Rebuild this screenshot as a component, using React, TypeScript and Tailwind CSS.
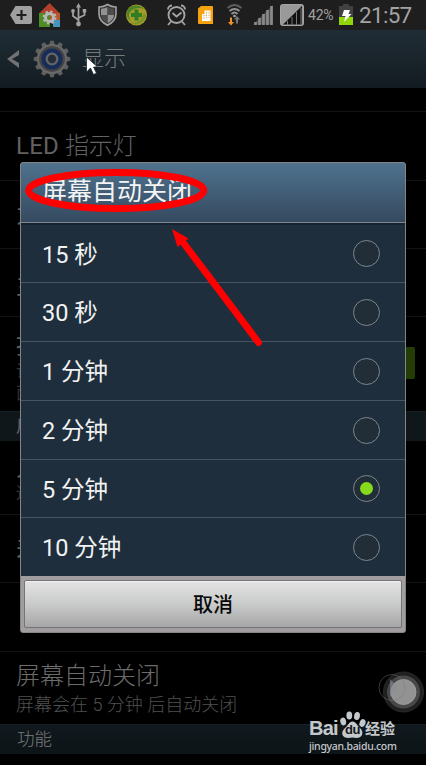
import React from "react";

const FONT = "font-['Roboto','Noto_Sans_CJK_SC',sans-serif]";

function StatusBar() {
  return (
    <div className="relative flex h-[30px] w-full shrink-0 items-center bg-[#1e1e1e]">
      <svg className="h-[30px] w-[305px] shrink-0" viewBox="0 0 305 30">
        <path d="M15.500 6H30a2 2 0 0 1 2 2v14a2 2 0 0 1-2 2H15.500L10 15z" fill="#a0a0a0" />
        <path d="M21.500 10v10M16.500 15h10" stroke="#1e1e1e" strokeWidth="2.200" />
        <path d="M39 13.500 49.500 3 60 13.500z" fill="#b2402d" />
        <path d="M39 13h11v14H39z" fill="#4d8d25" />
        <path d="M50 13h10v7H50z" fill="#b7562c" />
        <path d="M53 20h7v7h-7z" fill="#4695ba" />
        <circle cx="49.500" cy="17.500" r="4" fill="none" stroke="#b8b8b8" strokeWidth="3" />
        <circle cx="49.500" cy="17.500" r="6" fill="none" stroke="#b8b8b8" strokeWidth="2" strokeDasharray="2.300 2.412" />
        <path d="M78.500 6v18M73 11v5l5.500 4M84.500 11v4L78.500 18" stroke="#a0a0a0" strokeWidth="1.800" fill="none" />
        <g fill="#a0a0a0">
          <path d="m78.500 3 2.500 4.500h-5z" />
          <circle cx="78.500" cy="24" r="2.400" />
          <circle cx="73" cy="11" r="1.900" />
          <path d="M82.700 9h3.500v3.500h-3.500z" />
        </g>
        <path d="M107.500 4.500Q103 7.200 99 7v7c0 5.500 4 9 8.500 11.300 4.500-2.300 8.500-5.800 8.500-11.300V7q-4 .2-8.500-2.500z" fill="#333" stroke="#a3a3a3" strokeWidth="1.600" />
        <path d="M107.500 7q-3 1.600-6.500 1.700V15h6.500zM107.500 15v8.300c3.500-2 6.500-4.500 6.500-8.300z" fill="#929292" />
        <path d="M107.500 7q3 1.600 6.500 1.700V15h-6.500zM107.500 15v8.300c-3.500-2-6.500-4.500-6.500-8.300z" fill="#4c4c4c" />
        <circle cx="136.500" cy="15" r="10.500" fill="#a59b29" />
        <path d="M127 12c2-8 13-8 17-3-6-2-10-1-14 3-2 3-1 6 1 9-3-2-5-5-4-9z" fill="#4d8526" />
        <path d="M146 16c-2 8-11 11-17 6 7 2 12 0 15-9z" fill="#78952a" />
        <path d="M136.500 9.500v11M131 15h11" stroke="#2f7d22" strokeWidth="4" />
        <g fill="none" stroke="#a3a3a3" strokeWidth="1.900">
          <circle cx="176.500" cy="15" r="8" />
          <path d="m172.500 13 4 3.500 5-4M168 9.500a4 4 0 0 1 4-4M185 9.500a4 4 0 0 0-4-4M171 21.500l-3 3.500M182 21.500l3 3.500" />
        </g>
        <path d="M198 8.500 201 6h11q1 0 1 1v17H199q-1 0-1-1z" fill="#f5a20e" />
        <path d="M202 14h2.500v-3.500h6V21H202z" fill="#fff" />
        <path d="M204 15v4M206.500 12v6M209 12v6" stroke="#d99a32" strokeWidth=".9" strokeDasharray="1.300 1.300" />
        <g fill="none" strokeWidth="2">
          <path d="M227.500 8q7-6 14 0" stroke="#5e5e5e" />
          <path d="M229.500 11q5-4 10 0M231.500 14q3-3 6 0" stroke="#929292" />
        </g>
        <circle cx="234.500" cy="16" r="1.300" fill="#aaa" />
        <path d="M230 17.500h2V22h2l-3 3.500-3-3.500h2z" fill="#f29425" />
        <path d="m237 16 3 3.500h-2v4h-2v-4h-2z" fill="#777" />
        <path d="M253 24.500 273 5v19.500z" fill="#4c4c4c" />
        <path d="M255.500 25v-3M259.500 25v-7M263.500 25V14M267.500 25v-15M271.500 25V6" stroke="#8a8a8a" strokeWidth="2.600" />
        <rect x="280.500" y="4.500" width="23" height="21" rx="2" fill="#999" stroke="#a5a5a5" />
        <path d="M283 24.500 302 6v18.500z" fill="#111" />
        <path d="M287.500 25v-4M292 25v-8M296.500 25V12M301 25V8" stroke="#777" strokeWidth="1" />
      </svg>
      <span className="ml-[3px] w-[28px] whitespace-nowrap text-[14px] leading-[30px] tracking-[-0.2px] text-[#a0a0a0]">42%</span>
      <svg className="ml-[1px] h-[30px] w-[18px] shrink-0" viewBox="336 0 18 30">
        <path d="M342 4h6v2h4v11h-14V6h4z" fill="#414141" />
        <path d="M338 17h14v8h-14z" fill="#91d60b" />
        <path d="m343 10 6 0-1.500 4h3L343 22l1.500-6H341z" fill="#fff" />
      </svg>
      <span className="ml-[4px] whitespace-nowrap text-[22.500px] leading-[30px] tracking-[-0.7px] text-[#a3a3a3]">21:57</span>
    </div>
  );
}

function Gear() {
  return (
    <svg className="ml-[13px] h-[38px] w-[38px]" viewBox="-19 -19 38 38">
      {[0, 30, 60, 90, 120, 150].map((a) => (
        <path key={a} d="M-1.800-18.300h3.600l1.200 5h-6zM-1.800 18.300h3.600l1.200-5h-6z" fill="#5f5f5f" transform={`rotate(${a})`} />
      ))}
      <circle r="14" fill="#4b4542" stroke="#686868" strokeWidth="2.200" />
      <circle r="10.800" fill="#172d59" stroke="#343d51" />
      <circle r="5.300" fill="#252d38" stroke="#626466" strokeWidth="2.300" />
    </svg>
  );
}

function SettingRow({ className, children }: { className: string; children?: React.ReactNode }) {
  return <div className={`w-full shrink-0 overflow-hidden border-b border-[#141414] pl-[16px] ${className}`}>{children}</div>;
}

const options = [
  { label: "15 秒", size: "h-[60px] pt-[2px]" },
  { label: "30 秒", size: "h-[59px]" },
  { label: "1 分钟", size: "h-[59px]" },
  { label: "2 分钟", size: "h-[59px]" },
  { label: "5 分钟", size: "h-[58px]", selected: true },
  { label: "10 分钟", size: "h-[58px]" },
];

function Dialog() {
  return (
    <div className="absolute left-[20px] top-[162px] flex h-[471px] w-[386px] flex-col overflow-hidden rounded-[3px] border border-[#858585] bg-[#a19da1]">
      <div className="flex h-[60px] shrink-0 items-center border-b border-[#84888c] bg-gradient-to-b from-[#4f728e] to-[#354a60] pb-[1px] pl-[21px] text-[25px] text-[#f4f4f4]">
        <span>屏幕自动关闭</span>
      </div>
      <div className="shrink-0 bg-[#1e2e3c] shadow-[inset_0_2px_0_#162431]">
        {options.map((o, i) => (
          <div
            key={o.label}
            className={`flex items-center justify-between pl-[21px] pr-[25px] text-[23.500px] text-[#f2f2f2] ${o.size} ${i < 5 ? "border-b border-[#475461]" : ""}`}
          >
            <span className="pt-[2px] leading-[30px]">{o.label}</span>
            <span className="flex h-[27px] w-[27px] items-center justify-center rounded-full border border-[#7c8790] bg-[#222e37]">
              {o.selected && <span className="h-[13px] w-[13px] rounded-full bg-[#87d91c]" />}
            </span>
          </div>
        ))}
      </div>
      <div className="flex min-h-0 flex-1 bg-[#a19da1] px-[3px] pb-[4px] pt-[4px]">
        <button className="flex w-full items-center justify-center rounded-[2px] border border-[#747474] bg-gradient-to-b from-[#e4e4e4] via-[#c9caca] to-[#a7a7a7] pt-[2px] text-[20px] font-medium text-[#080808] shadow-[inset_0_1px_0_#f0f0f0]">
          取消
        </button>
      </div>
    </div>
  );
}

function Watermark() {
  return (
    <div className="absolute left-[309px] top-[711px] h-[46px] w-[92px] text-[#c5c8ca]">
      <div className="flex h-[28px] items-end">
        <span className="w-[31px] font-['Liberation_Sans',sans-serif] text-[20px] font-bold leading-[22px] tracking-[-0.8px]">Bai</span>
        <div className="relative h-[28px] w-[25px]">
          <svg className="h-[28px] w-[26px]" viewBox="0 0 26 28" fill="currentColor">
            <ellipse cx="3.200" cy="10.500" rx="2.900" ry="3.900" transform="rotate(-15 3.200 10.500)" />
            <ellipse cx="9.300" cy="4.500" rx="2.900" ry="4.100" />
            <ellipse cx="17" cy="5" rx="2.900" ry="4.100" transform="rotate(10 17 5)" />
            <ellipse cx="22.500" cy="12" rx="2.900" ry="3.900" transform="rotate(20 22.500 12)" />
            <path d="M12.500 10.500c4 0 4 4 7.500 6.500 5 5 1.500 10-3.500 10l-4-.5-4 .5c-6 0-8.500-5-4-9.500 4-3 4-7 8-7z" />
          </svg>
          <span className="absolute left-[5px] top-[12px] font-['Liberation_Sans',sans-serif] text-[13px] font-bold leading-[14px] tracking-[-0.4px] text-[#10171b]">du</span>
        </div>
        <span className="whitespace-nowrap text-[15px] font-bold leading-[20px]">经验</span>
      </div>
      <div className="whitespace-nowrap font-['Noto_Sans','Open_Sans',sans-serif] text-[10.500px] font-medium leading-[15px] tracking-[-0.29px]">jingyan.baidu.com</div>
    </div>
  );
}

export default function App() {
  return (
    <div className={`relative flex h-[765px] w-[426px] flex-col overflow-hidden bg-black ${FONT}`}>
      <StatusBar />
      <header className="flex h-[58px] w-full shrink-0 items-center bg-gradient-to-b from-[#202d36] to-[#131b21] pl-[7px]">
        <svg className="h-[20px] w-[13px]" viewBox="0 0 13 20">
          <path d="M12 1v5L5 10l7 4v5L0 10z" fill="#727272" />
        </svg>
        <Gear />
        <span className="ml-[11px] pb-[2px] text-[22px] font-light text-[#74797c]">显示</span>
      </header>

      <SettingRow className="h-[24px]" />
      <SettingRow className="h-[69px] pt-[19px] text-[24px] leading-[30px] text-[#626262]">
        <span className="tracking-[0.2px]">LED</span> <span className="font-light">指示灯</span>
      </SettingRow>
      <SettingRow className="h-[68px] pt-[19px] text-[24px] leading-[30px] text-[#5f5f5f]">为</SettingRow>
      <SettingRow className="h-[68px] pt-[22px] text-[24px] leading-[30px] text-[#5f5f5f]">主</SettingRow>
      <div className="flex h-[94px] w-full shrink-0 justify-between overflow-hidden pl-[16px] pr-[11px] pt-[13px] text-[#5f5f5f]">
        <div>
          <div className="text-[24px] leading-[30px]">按</div>
          <div className="text-[17px] leading-[22px] text-[#343434]">请</div>
          <div className="text-[17px] leading-[22px] text-[#343434]">面</div>
        </div>
        <div className="mt-[17px] h-[32px] w-[60px] rounded-[2px] bg-[#243d05]" />
      </div>
      <div className="h-[30px] w-full shrink-0 border-t border-[#182027] bg-[#10171b] pl-[16px] text-[17px] leading-[29px] text-[#656565]">用</div>
      <SettingRow className="h-[74px] pt-[12px] text-[24px] leading-[30px] text-[#5f5f5f]">
        <div>人</div>
        <div className="text-[17px] leading-[20px] text-[#343434]">适</div>
      </SettingRow>
      <SettingRow className="h-[68px] pt-[19px] text-[24px] leading-[30px] text-[#5f5f5f]">差</SettingRow>
      <SettingRow className="h-[69px]" />
      <div className="flex h-[72px] w-full shrink-0 flex-col pl-[16px] pt-[9px] font-light">
        <div className="text-[24px] leading-[31px] text-[#6c6c6c]">屏幕自动关闭</div>
        <div className="whitespace-nowrap text-[18px] leading-[25px] text-[#505050]">屏幕会在 5 分钟 后自动关闭</div>
      </div>
      <div className="h-[30px] w-full shrink-0 border-t border-[#182027] bg-gradient-to-b from-[#11191e] to-[#0d1418] pl-[17px] text-[17.500px] font-light leading-[29px] text-[#7c7c7c]">功能</div>

      <Dialog />

      <svg className="absolute left-[84px] top-[56px] h-[20px] w-[15px]" viewBox="0 0 15 20">
        <path d="M2.500 1v15l4-4 3 6.500 3-1.300-3-6.200h4z" fill="#fff" stroke="#111b22" strokeWidth=".7" />
      </svg>
      <svg className="pointer-events-none absolute left-0 top-0 h-[765px] w-[426px]" viewBox="0 0 426 765">
        <ellipse cx="116.200" cy="190.500" rx="87.500" ry="18" fill="none" stroke="#ff0000" strokeWidth="7" />
        <path d="m182 241 76.500 101.500" stroke="#ff0000" strokeWidth="7" strokeLinecap="round" />
        <path d="m172 229 16.500 9.500-11 8.500z" fill="#ff0000" />
      </svg>
      <svg className="absolute left-[377px] top-[670px] h-[45px] w-[49px]" viewBox="377 670 49 45">
        <circle cx="403.500" cy="692" r="20" fill="#202020" stroke="#292929" />
        <circle cx="403.500" cy="692" r="16.500" fill="#484848" />
        <circle cx="403.500" cy="692" r="12.500" fill="#929292" stroke="#9c9c9c" />
        <circle cx="392" cy="687.500" r="13" fill="none" stroke="#777" strokeOpacity=".45" />
        <path d="m390 679 8 8.500-8 9z" fill="#899099" fillOpacity=".6" />
      </svg>
      <Watermark />
    </div>
  );
}
